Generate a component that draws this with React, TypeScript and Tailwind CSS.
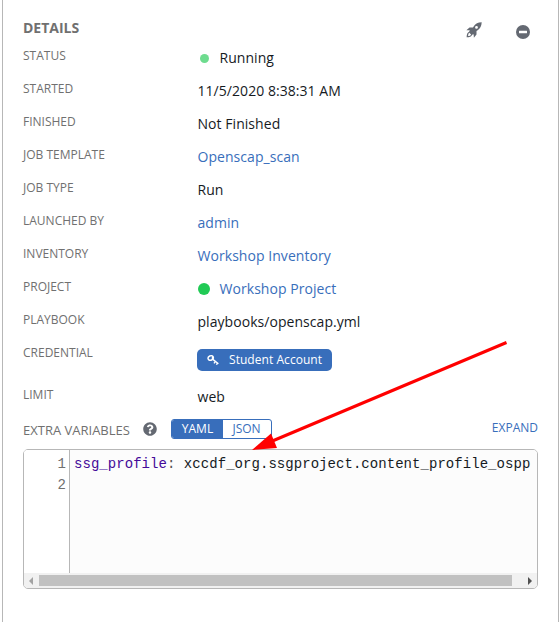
import React from 'react';
import { FaQuestionCircle } from 'react-icons/fa';

const link = 'text-[#386ebb]';

function Row({ label, children, height = 'h-[33px]' }: { label: string; children: React.ReactNode; height?: string }) {
  return (
    <div className={`flex ${height}`}>
      <div className="w-[174.5px] shrink-0 text-[12px] leading-[17px] text-[#707070]">{label}</div>
      <div className="flex h-[20px] items-center pt-[2px] text-[14px] leading-[20px] tracking-[0.05px]">{children}</div>
    </div>
  );
}

function RocketIcon() {
  return (
    <svg className="mr-[34px] h-[16px] w-[16px]" viewBox="0 0 16 16" fill="currentColor">
      <path
        fillRule="evenodd"
        d="M15.700 0.300C11.800 0.300 9.600 1.700 7.800 4.300L7 5.500L3.500 5.400L0.400 8.200L3.800 8.300L3.100 9.700C1.500 10.200 0.700 12.200 0.600 15.300C3.600 15.300 5.500 14.600 6.100 12.700L7.600 12.200L7.900 15.700L10.500 12.500V9L11.700 8.200C14.200 6.300 15.600 4.200 15.700 0.300ZM10.500 4A1.400 1.400 0 1 1 10.500 6.800A1.400 1.400 0 1 1 10.500 4ZM3.300 10.800L5.100 12.500C4.600 13.600 3.500 14 2.100 14C2.200 12.600 2.500 11.500 3.300 10.800Z"
      />
    </svg>
  );
}

function MinusIcon() {
  return (
    <svg className="mr-[8px] mt-[3px] h-[14px] w-[14px]" viewBox="0 0 14 14">
      <circle cx="7" cy="7" r="7" fill="currentColor" />
      <rect x="3" y="5.800" width="8" height="2.400" rx="0.300" fill="white" />
    </svg>
  );
}

function KeyIcon() {
  return (
    <svg className="ml-[10px] mr-[10px] h-[12px] w-[12px]" viewBox="0 0 12 12" fill="none" stroke="white" strokeWidth="1.4">
      <ellipse cx="3.7" cy="4" rx="2.7" ry="2.2" transform="rotate(-25 3.7 4)" />
      <path d="M5.500 1.900V5.100L11.400 9.700M8.400 7.400L7 9.400M10.400 9L9.500 10.800" />
    </svg>
  );
}

export default function App() {
  return (
    <div className="relative h-[622px] w-[559px] overflow-hidden bg-white pl-[2px] font-['Open_Sans',sans-serif] text-[#161b1f]">
      <div className="h-full w-[557px] border-x border-[#b7b7b7] pl-[20px] pr-[20px]">
        <div className="flex h-[47px] justify-between pt-[18px]">
          <h1 className="text-[14px] font-bold leading-[20px] text-[#707070]">DETAILS</h1>
          <div className="flex pt-[4px] text-[#646972]">
            <RocketIcon />
            <MinusIcon />
          </div>
        </div>
        <Row label="STATUS">
          <span className="ml-[2px] mr-[11px] h-[9px] w-[9px] rounded-full bg-[#6edc8f]" />
          Running
        </Row>
        <Row label="STARTED">11/5/2020 8:38:31 AM</Row>
        <Row label="FINISHED">Not Finished</Row>
        <Row label="JOB TEMPLATE"><span className={link}>Openscap_scan</span></Row>
        <Row label="JOB TYPE">Run</Row>
        <Row label="LAUNCHED BY"><span className={link}>admin</span></Row>
        <Row label="INVENTORY"><span className={link}>Workshop Inventory</span></Row>
        <Row label="PROJECT">
          <span className="mr-[10px] h-[12px] w-[12px] rounded-full bg-[#21ca55]" />
          <span className={link}>Workshop Project</span>
        </Row>
        <Row label="PLAYBOOK">playbooks/openscap.yml</Row>
        <Row label="CREDENTIAL" height="h-[42px]">
          <span className="mt-[9px] -ml-[0.5px] flex h-[22px] w-[135px] shrink-0 items-center rounded-[5px] bg-[#386ebb] text-[12px] text-white">
            <KeyIcon />
            Student Account
          </span>
        </Row>
        <Row label="LIMIT" height="h-[31px]">web</Row>
        <div className="flex h-[32px] items-start pt-[2px]">
          <span className="w-[120px] pt-px text-[13px] leading-[20px] text-[#707070]">EXTRA VARIABLES</span>
          <FaQuestionCircle className="mt-[3px] h-[14px] w-[14px] text-[#646972]" />
          <div className="ml-[14px] flex h-[20px] w-[101px] overflow-hidden rounded-[3px] border border-[#386ebb] text-[12px] leading-[17px]">
            <span className="w-[51px] bg-[#386ebb] text-center text-white">YAML</span>
            <span className={`grow pr-px text-center ${link}`}>JSON</span>
          </div>
          <span className={`ml-auto pt-px text-[12px] leading-[15px] ${link}`}>EXPAND</span>
        </div>
        <div className="flex h-[140px] flex-col overflow-hidden rounded-[5px] border border-[#b7b7b7] font-['Liberation_Mono',monospace] text-[14px] leading-[21px]">
          <div className="flex grow bg-[#fcfcfc]">
            <div className="w-[46px] border-r border-[#b7b7b7] bg-white pr-[3px] pt-[4px] text-right text-[#707070]">
              <div>1</div>
              <div>2</div>
            </div>
            <div className="whitespace-pre pl-[4px] pt-[4px] tracking-[0.05px]">
              <span className="text-[#440a99]">ssg_profile</span>
              <span className="text-[#555555]">:</span> xccdf_org.ssgproject.content_profile_ospp
            </div>
          </div>
          <div className="flex h-[15px] items-center justify-between bg-[#f1f1f1] px-[5px]">
            <svg className="h-[8px] w-[4px]" viewBox="0 0 4 8"><path d="M4 0V8L0 4Z" fill="#a3a3a3" /></svg>
            <div className="ml-[6px] mr-auto h-[11px] w-[473px] bg-[#c1c1c1]" />
            <svg className="h-[8px] w-[4px]" viewBox="0 0 4 8"><path d="M0 0V8L4 4Z" fill="#505050" /></svg>
          </div>
        </div>
      </div>
      <svg className="pointer-events-none absolute left-0 top-0 h-[622px] w-[559px]" viewBox="0 0 559 622">
        <path d="M506.500 342.500L270 442" stroke="#ff0000" strokeWidth="3" />
        <path d="M252 450L271 433.500L277 448Z" fill="#ff0000" />
      </svg>
    </div>
  );
}
